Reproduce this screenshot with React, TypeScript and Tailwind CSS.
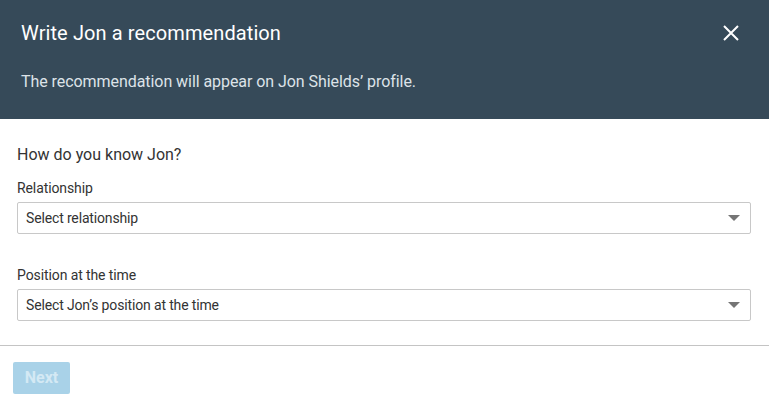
export default function App() {
  return (
    <div className="w-[769px] h-[408px] bg-white overflow-hidden" style={{ fontFamily: "Roboto, 'Liberation Sans', sans-serif" }}>
      {/* Header */}
      <div className="bg-[#364a59] h-[119px] pl-[21px] pr-[30px] pt-[20px]">
        <div className="flex items-center justify-between">
          <h1 className="text-[20px] leading-[26px] tracking-[0.1px] text-white">Write Jon a recommendation</h1>
          <button className="text-white">
            <svg viewBox="0 0 16 16" className="w-4 h-4" fill="none" stroke="currentColor" strokeWidth="2">
              <path d="M1 1l14 14M15 1L1 15" />
            </svg>
          </button>
        </div>
        <p className="mt-[24px] text-[16px] leading-[24px] tracking-[-0.06px] text-[#dde3e8]">
          The recommendation will appear on Jon Shields’ profile.
        </p>
      </div>

      {/* Body */}
      <div className="pl-[17px] pr-[18px] pt-[24px] pb-[24px] text-[#333333]">
        <h2 className="text-[16px] leading-[24px]">How do you know Jon?</h2>
        <label className="block mt-[11px] text-[14px] leading-[20px] tracking-[-0.1px]">Relationship</label>
        <div className="mt-[4px] h-[32px] border border-[#c8c8c8] rounded-[2px] flex items-center justify-between pl-[8px] pr-[10px]">
          <span className="text-[14px] tracking-[-0.15px]">Select relationship</span>
          <svg viewBox="0 0 12 6" className="w-[12px] h-[6px]" fill="#757575">
            <path d="M0 0h12L6 6z" />
          </svg>
        </div>
        <label className="block mt-[31px] text-[14px] leading-[20px] tracking-[-0.1px]">Position at the time</label>
        <div className="mt-[4px] h-[32px] border border-[#c8c8c8] rounded-[2px] flex items-center justify-between pl-[8px] pr-[10px]">
          <span className="text-[14px] tracking-[-0.15px]">Select Jon’s position at the time</span>
          <svg viewBox="0 0 12 6" className="w-[12px] h-[6px]" fill="#757575">
            <path d="M0 0h12L6 6z" />
          </svg>
        </div>
      </div>

      {/* Footer */}
      <div className="border-t border-[#c4c4c4] pl-[13px] pt-[16px]">
        <button className="w-[57px] h-[32px] rounded-[2px] bg-[#a9d2e8] text-[#d4e9f4] font-bold text-[16px]">
          Next
        </button>
      </div>
    </div>
  );
}
